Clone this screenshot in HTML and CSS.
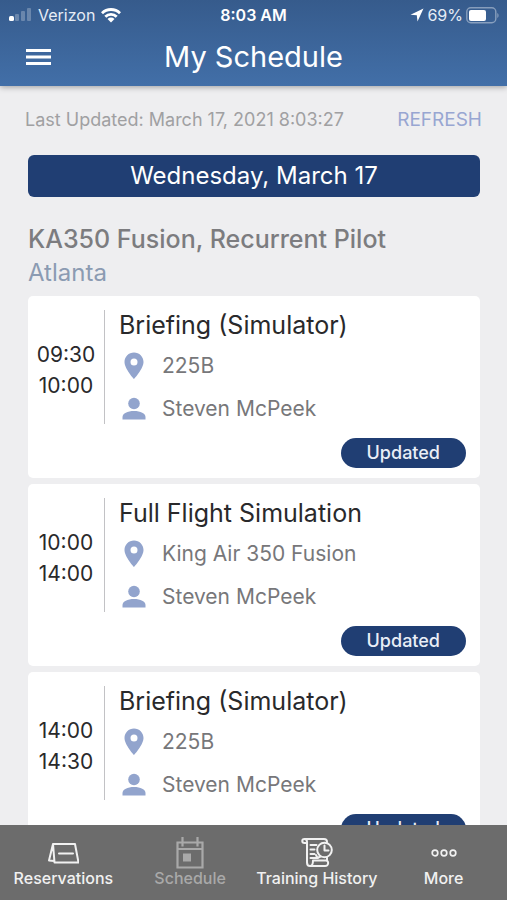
FILE: index.html
```html
<!DOCTYPE html>
<html lang="en">
<head>
<meta charset="utf-8">
<meta name="viewport" content="width=device-width, initial-scale=1">
<title>My Schedule</title>
<link rel="stylesheet" href="styles.css">
</head>
<body>
<svg class="sprite" aria-hidden="true">
  <symbol id="pin" viewBox="0 0 20 28"><path fill-rule="evenodd" d="M10 .5C4.700 .5 .5 4.700 .5 10c0 6.800 9.500 17 9.500 17s9.500-10.200 9.500-17C19.500 4.700 15.300 .5 10 .5zm0 6a3.500 3.500 0 1 1 0 7 3.500 3.500 0 0 1 0-7z"/></symbol>
  <symbol id="person" viewBox="0 0 24 24"><circle cx="12" cy="6.500" r="5.800"/><path d="M.5 22.500v-2.500c0-3.500 5-6 11.500-6s11.500 2.500 11.500 6v2.500z"/></symbol>
</svg>
<div class="app">
  <header class="header">
    <div class="status">
      <div class="status-side">
        <svg width="24" height="14" viewBox="0 0 24 14" fill="#fff"><rect x="1" y="8" width="5" height="5" rx="1.500"/><g opacity=".25"><rect x="7" y="6" width="4" height="7" rx="1"/><rect x="13" y="3" width="4" height="10" rx="1"/><rect x="19" y="0" width="4" height="13" rx="1"/></g></svg>
        <span class="carrier">Verizon</span>
        <svg width="20" height="16" viewBox="0 0 20 16" fill="none" stroke="#fff" stroke-width="2.800"><path d="M1 6.200a12.800 12.800 0 0 1 18 0M4.300 9.700a8 8 0 0 1 11.400 0"/><path fill="#fff" stroke="none" d="M6.500 12a5 5 0 0 1 7 0L10 15.500z"/></svg>
      </div>
      <span class="clock">8:03 AM</span>
      <div class="status-side status-right">
        <svg width="14" height="14" viewBox="0 0 14 14" fill="#fff"><path d="M13.500 .5L.5 6.700l6.300.6.700 6.200z"/></svg>
        <span class="battery-level">69%</span>
        <svg width="33" height="17" viewBox="0 0 33 17"><rect x=".8" y=".8" width="29" height="15" rx="4" fill="none" stroke="#fff" stroke-opacity=".4" stroke-width="1.400"/><rect x="3" y="3" width="17" height="11" rx="2" fill="#fff"/><path d="M31.300 6v5c1.700-.8 1.700-4.200 0-5z" fill="#fff" fill-opacity=".4"/></svg>
      </div>
    </div>
    <div class="titlebar">
      <button class="menu" type="button" aria-label="Menu"><svg width="25" height="18" viewBox="0 0 25 18" fill="#fff"><path d="M0 1h25v3H0zM0 7.500h25v3H0zM0 14h25v3H0z"/></svg></button>
      <h1>My Schedule</h1>
    </div>
  </header>
  <main class="content">
    <div class="meta"><span>Last Updated: March 17, 2021 8:03:27</span><button class="refresh" type="button">REFRESH</button></div>
    <div class="schedule">
      <h2 class="day">Wednesday, March 17</h2>
      <h3 class="course">KA350 Fusion, Recurrent Pilot</h3>
      <p class="city">Atlanta</p>
      <article class="card">
        <div class="times"><time>09:30</time><time>10:00</time></div>
        <div class="details">
          <h4>Briefing (Simulator)</h4>
          <p><svg class="icon"><use href="#pin"/></svg>225B</p>
          <p><svg class="icon person"><use href="#person"/></svg>Steven McPeek</p>
        </div>
        <span class="badge">Updated</span>
      </article>
      <article class="card">
        <div class="times"><time>10:00</time><time>14:00</time></div>
        <div class="details">
          <h4>Full Flight Simulation</h4>
          <p><svg class="icon"><use href="#pin"/></svg>King Air 350 Fusion</p>
          <p><svg class="icon person"><use href="#person"/></svg>Steven McPeek</p>
        </div>
        <span class="badge">Updated</span>
      </article>
      <article class="card">
        <div class="times"><time>14:00</time><time>14:30</time></div>
        <div class="details">
          <h4>Briefing (Simulator)</h4>
          <p><svg class="icon"><use href="#pin"/></svg>225B</p>
          <p><svg class="icon person"><use href="#person"/></svg>Steven McPeek</p>
        </div>
        <span class="badge">Updated</span>
      </article>
    </div>
  </main>
  <nav class="tabs">
    <a href="#reservations"><svg width="32" height="32" viewBox="0 0 32 32" fill="none" stroke="currentColor" stroke-width="2" stroke-linejoin="round" stroke-linecap="round"><path d="M6 7h22l3.500 18.500H7.500zM6 7L2 23.500l5.200.5M6 7l1.500 18.500M12 16.500h14"/></svg>Reservations</a>
    <a href="#schedule" class="current" aria-current="page"><svg width="32" height="32" viewBox="0 0 32 32" fill="none" stroke="currentColor" stroke-width="2.200"><path d="M3.500 5.500h25v25h-25zM3.500 12h25M8.500 0v9.500M23.500 0v9.500"/><path d="M9 16.500h8v8H9z" fill="currentColor" stroke="none"/></svg>Schedule</a>
    <a href="#history"><svg width="32" height="32" viewBox="0 0 32 32" fill="none" stroke="currentColor" stroke-width="2" stroke-linejoin="round" stroke-linecap="round"><path d="M5.500 6H3.500C.5 6 .5 2 3.500 2H23c2 0 3 1 3 3M3.500 2c2 0 2.500 1.500 2.500 3V25.500c0 2 1 3.500 3 3.500H24c4 0 4-5.500 1-5.500H12c0 3-1 5.500-3 5.500M26 20.500v3M9.500 8h6M9.500 12.500h4M9.500 17h4M9.500 21h7"/><circle cx="23.500" cy="13" r="7.300"/><path d="M23.500 8.500v5h4M15 18l1.500 3 3-1.500"/></svg>Training History</a>
    <a href="#more"><svg width="32" height="32" viewBox="0 0 32 32" fill="none" stroke="currentColor" stroke-width="1.700"><circle cx="7" cy="16" r="2.800"/><circle cx="16" cy="16" r="2.800"/><circle cx="25" cy="16" r="2.800"/></svg>More</a>
  </nav>
</div>
</body>
</html>
```
FILE: styles.css
```css
* { box-sizing: border-box; }
body, h1, h2, h3, h4, p { margin: 0; font-weight: 400; }
body { font-family: Inter, "Liberation Sans", sans-serif; color: #29292b; }
button { border: 0; padding: 0; background: none; font: inherit; color: inherit; cursor: pointer; }
svg { display: block; flex: none; }
.sprite { position: absolute; width: 0; height: 0; }
.app { display: flex; flex-direction: column; height: 100vh; background: #eeeef0; }

.header { flex: none; position: relative; background: linear-gradient(#365b8c, #426fa8); color: #fff; box-shadow: 0 1px 6px rgba(0, 0, 0, .35); }
.status { display: grid; grid-template-columns: 1fr auto 1fr; align-items: center; height: 30px; padding: 0 8px; font-size: 16px; }
.status-side { display: flex; align-items: center; gap: 6px; color: #e6edf6; }
.status-right { justify-content: flex-end; gap: 3px; }
.clock { font-weight: 600; }
.titlebar { display: grid; grid-template-columns: 1fr auto 1fr; align-items: center; height: 56px; padding: 0 26px 3px; }
.menu { justify-self: start; }
h1 { font-size: 29px; line-height: 36px; }

.content { flex: 1; min-height: 0; overflow-y: auto; scrollbar-width: none; }
.meta { display: flex; justify-content: space-between; align-items: center; padding: 22px 25px 0; font-size: 18px; line-height: 24px; color: #a0a0a2; }
.refresh { color: #98a6d2; font-size: 19px; }
.schedule { padding: 23px 27px 24px 28px; }
.day { border-radius: 6px; background: #203e73; color: #fff; font-size: 24px; line-height: 42px; text-align: center; }
.course { margin-top: 25px; color: #7c7c7f; font-size: 25px; font-weight: 500; line-height: 34px; }
.city { margin-bottom: 7px; color: #8b9bb2; font-size: 24px; line-height: 33px; }

.card { display: grid; grid-template-columns: 77px 1fr; margin-bottom: 6px; padding: 14px 14px 10px 0; border-radius: 5px; background: #fff; }
.times { display: flex; flex-direction: column; align-items: center; justify-content: center; margin-bottom: 6px; padding-top: 6px; border-right: 1px solid #c2c2c5; font-size: 21px; line-height: 31px; }
.details { padding-left: 14px; }
.details h4 { margin-bottom: 4px; font-size: 25px; line-height: 30px; }
.details p { display: flex; align-items: center; gap: 13px; color: #77777a; font-size: 21px; line-height: 43px; }
.icon { width: 30px; height: 28px; padding: 0 2px; fill: #92a4cd; }
.icon.person { height: 24px; }
.badge { grid-column: 2; justify-self: end; margin-top: 8px; padding: 0 26px; border-radius: 15px; background: #203e73; color: #e9eef7; font-size: 18px; font-weight: 500; line-height: 30px; }

.tabs { flex: none; display: grid; grid-template-columns: repeat(4, 1fr); height: 75px; padding-top: 12px; background: #6c6c6c; }
.tabs a { display: flex; flex-direction: column; align-items: center; color: #f1f1f1; font-size: 16px; font-weight: 500; line-height: 18px; text-decoration: none; white-space: nowrap; }
.tabs .current { color: #a9a9a9; }
```
